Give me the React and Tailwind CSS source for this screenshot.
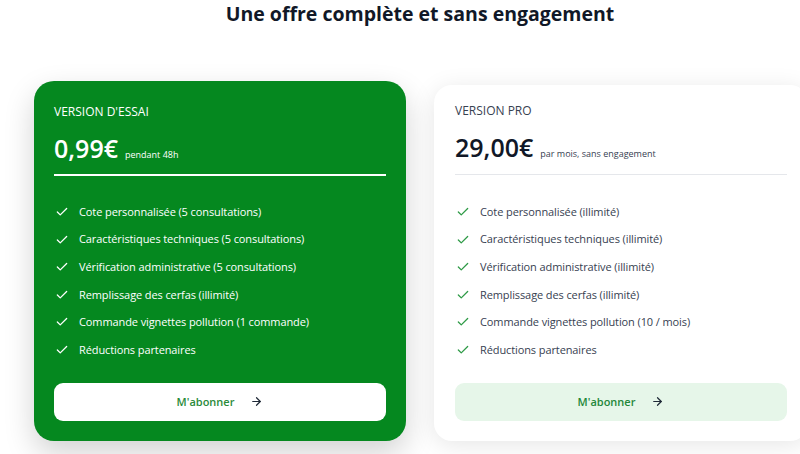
import { ArrowRight, Check } from 'lucide-react';

const plans = [
  {
    id: 'trial',
    label: "VERSION D'ESSAI",
    price: '0,99€',
    note: 'pendant 48h',
    features: [
      'Cote personnalisée (5 consultations)',
      'Caractéristiques techniques (5 consultations)',
      'Vérification administrative (5 consultations)',
      'Remplissage des cerfas (illimité)',
      'Commande vignettes pollution (1 commande)',
      'Réductions partenaires',
    ],
    highlighted: true,
  },
  {
    id: 'pro',
    label: 'VERSION PRO',
    price: '29,00€',
    note: 'par mois, sans engagement',
    features: [
      'Cote personnalisée (illimité)',
      'Caractéristiques techniques (illimité)',
      'Vérification administrative (illimité)',
      'Remplissage des cerfas (illimité)',
      'Commande vignettes pollution (10 / mois)',
      'Réductions partenaires',
    ],
    highlighted: false,
  },
];

function PlanCard({ plan }) {
  const hi = plan.highlighted;

  return (
    <div
      className={`shrink-0 flex flex-col ${
        hi
          ? 'w-[372px] h-[360px] rounded-[20px] bg-[#05881f] text-white px-[20px] pt-[23px] shadow-[0_12px_30px_rgba(0,0,0,0.18)]'
          : 'w-[374px] h-[356px] rounded-[18px] bg-white text-[#1f2937] pl-[21px] pr-[21px] pt-[18px] shadow-[0_4px_24px_rgba(0,0,0,0.10)]'
      }`}
    >
      {/* Header */}
      <div className={`text-[12px] leading-4 ${hi ? 'text-white' : 'text-[#374151]'}`}>{plan.label}</div>
      <div className="flex items-baseline gap-[7px] mt-[12px]">
        <span className={`text-[25px] leading-8 font-semibold ${hi ? 'text-white' : 'text-[#111827]'}`}>
          {plan.price}
        </span>
        <span className={`text-[9px] ${hi ? 'text-white' : 'text-[#374151]'}`}>{plan.note}</span>
      </div>
      <div className={hi ? 'mt-[10px] h-[2px] bg-white' : 'mt-[11px] h-px bg-[#e5e7eb]'} />

      {/* Features */}
      <ul className={`${hi ? 'mt-[26px]' : 'mt-[27px]'} flex flex-col gap-[7.6px]`}>
        {plan.features.map((f) => (
          <li key={f} className="flex items-center h-5 text-[11px] tracking-[-0.1px]">
            <Check
              className={`w-[14px] h-[14px] ml-[1px] ${hi ? 'text-white' : 'text-[#2e9a46]'}`}
              strokeWidth={2.2}
            />
            <span className={`ml-[10px] ${hi ? 'text-white' : 'text-[#374151]'}`}>{f}</span>
          </li>
        ))}
      </ul>

      {/* Button */}
      <button
        className={`mt-[23px] h-[38px] w-full rounded-[9px] flex items-center justify-center gap-[16px] text-[11px] font-semibold ${
          hi ? 'bg-white text-[#2a8a3a]' : 'bg-[#e6f6e9] text-[#24873a]'
        }`}
      >
        M'abonner
        <ArrowRight className="w-[13px] h-[13px] text-[#1f2937]" strokeWidth={2.2} />
      </button>
    </div>
  );
}

export default function App() {
  return (
    <div
      className="w-[800px] h-[454px] overflow-hidden bg-white"
      style={{ fontFamily: '"Open Sans", "Noto Sans", sans-serif' }}
    >
      <h2 className="pl-[40px] text-center text-[19.5px] leading-7 font-bold text-[#111827]">
        Une offre complète et sans engagement
      </h2>
      <div className="mt-[53px] flex items-end gap-[28px] pl-[34px]">
        {plans.map((p) => (
          <PlanCard key={p.id} plan={p} />
        ))}
      </div>
    </div>
  );
}
